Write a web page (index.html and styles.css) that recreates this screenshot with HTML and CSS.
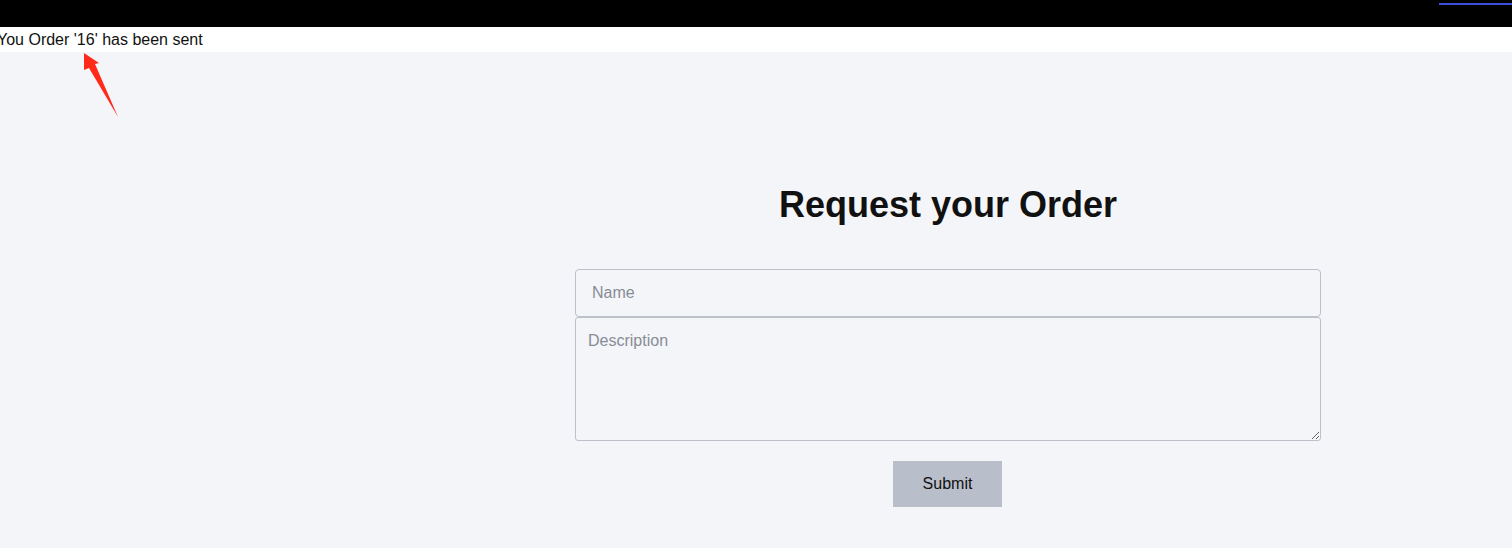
FILE: index.html
```html
<!DOCTYPE html>
<html lang="en">
<head>
<meta charset="utf-8">
<title>Request your Order</title>
<link rel="stylesheet" href="styles.css">
</head>
<body>
<header class="topbar">
  <span class="progress"></span>
</header>
<div class="notice">You Order '16' has been sent</div>
<svg class="annot" width="60" height="80" viewBox="0 0 60 80" aria-hidden="true">
  <polygon points="9,3 24,13 20,14 43,67 14,18 9,20" fill="#ff2a1a"/>
</svg>
<main class="page">
  <aside class="side"></aside>
  <section class="content">
    <h1 class="title">Request your Order</h1>
    <form class="form">
      <input class="field" type="text" placeholder="Name">
      <textarea class="area" placeholder="Description"></textarea>
      <div class="actions"><button class="btn" type="button">Submit</button></div>
    </form>
  </section>
</main>
</body>
</html>
```
FILE: styles.css
```css
* { box-sizing: border-box; }
html, body { margin: 0; padding: 0; }
body {
  font-family: "Liberation Sans", Arial, sans-serif;
  background: #f4f5f9;
  color: #111;
  height: 548px;
  overflow: hidden;
  position: relative;
}
.topbar {
  height: 27px;
  background: #000;
  display: flex;
  justify-content: flex-end;
  align-items: flex-start;
  padding-top: 3px;
}
.progress {
  width: 73px;
  height: 2px;
  background: #3d4fdc;
}
.notice {
  background: #fff;
  height: 25px;
  font-size: 16px;
  line-height: 25px;
  margin-left: -3px;
  color: #111;
}
.annot {
  position: absolute;
  left: 75px;
  top: 50px;
}
.page {
  display: flex;
  height: 496px;
}
.side { width: 384px; flex: none; }
.content {
  flex: 1;
  display: flex;
  flex-direction: column;
  align-items: center;
  padding-top: 131px;
}
.title {
  margin: 0 0 42px;
  font-size: 36px;
  font-weight: bold;
  line-height: 44px;
  color: #111;
}
.form {
  width: 746px;
  display: flex;
  flex-direction: column;
}
.field, .area {
  width: 100%;
  font-family: "Liberation Sans", Arial, sans-serif;
  font-size: 16px;
  background: #f4f5f9;
  border: 1px solid #bcc0c9;
  border-radius: 4px;
  color: #111;
  outline: none;
}
.field {
  height: 48px;
  padding: 0 16px;
}
.area {
  height: 124px;
  padding: 14px 12px 12px;
  resize: both;
  border-radius: 3px;
  display: block;
}
.field::placeholder, .area::placeholder { color: #878c95; }
.actions {
  display: flex;
  justify-content: center;
  margin-top: 20px;
}
.btn {
  width: 109px;
  height: 46px;
  background: #b9bfca;
  border: none;
  border-radius: 0;
  font-family: "Liberation Sans", Arial, sans-serif;
  font-size: 16px;
  color: #111;
  margin-left: -1px;
}
```
